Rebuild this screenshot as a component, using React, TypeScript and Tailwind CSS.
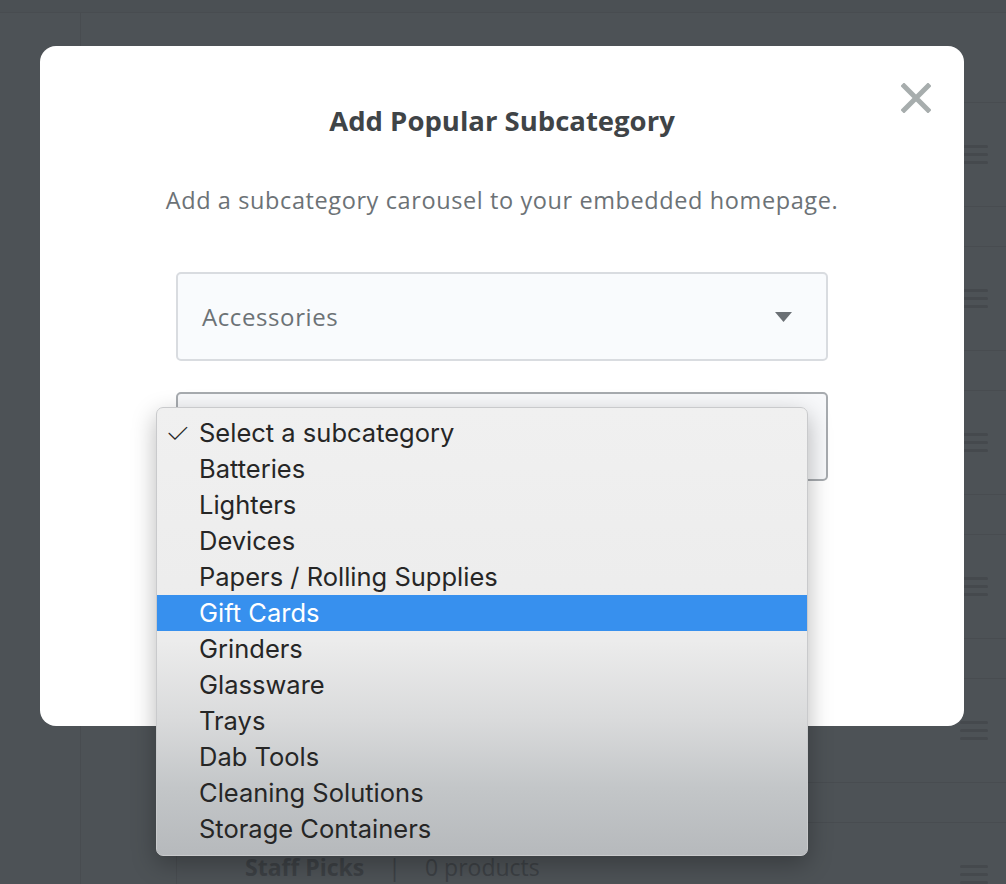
const subcategories = [
  "Select a subcategory",
  "Batteries",
  "Lighters",
  "Devices",
  "Papers / Rolling Supplies",
  "Gift Cards",
  "Grinders",
  "Glassware",
  "Trays",
  "Dab Tools",
  "Cleaning Solutions",
  "Storage Containers",
];

function Hamburger() {
  return (
    <div className="flex w-[28px] flex-col gap-[5px]">
      <span className="h-[3px] w-full rounded-full bg-[#45494d]" />
      <span className="h-[3px] w-full rounded-full bg-[#45494d]" />
      <span className="h-[3px] w-full rounded-full bg-[#45494d]" />
    </div>
  );
}

export default function App() {
  return (
    <div className="relative h-[884px] w-[1006px] overflow-hidden bg-[#4d5256] font-['Open_Sans',sans-serif]">
      {/* dimmed page behind the modal */}
      <div className="flex h-full flex-col">
        <div className="h-[13px] shrink-0 border-b border-[#484c50] bg-[#4b5054]" />
        <div className="flex flex-1">
          <aside className="w-[81px] shrink-0 border-r border-[#484c50]" />
          <main className="flex flex-1 flex-col gap-[39px] pl-[95px] pt-[89px]">
            {Array.from({ length: 6 }).map((_, i) => (
              <div
                key={i}
                className="flex h-[105px] shrink-0 items-center justify-between border border-r-0 border-[#484c50] pl-[68px] pr-[18px]"
              >
                {i === 5 ? (
                  <div className="flex items-center gap-[24px] self-start pt-[31px] text-[23px] leading-[26px] text-[#3c4044]">
                    <span className="font-bold">Staff Picks</span>
                    <span>|</span>
                    <span>0 products</span>
                  </div>
                ) : (
                  <div />
                )}
                <Hamburger />
              </div>
            ))}
          </main>
        </div>
      </div>

      {/* modal */}
      <div className="absolute left-[40px] top-[46px] flex h-[680px] w-[924px] flex-col items-center rounded-[16px] bg-white px-[136px] pt-[57px]">
        <button className="absolute right-[33px] top-[37px] text-[#a7adad]" aria-label="Close">
          <svg width="30" height="30" viewBox="0 0 30 30">
            <path d="M3 3 L27 27 M27 3 L3 27" stroke="currentColor" strokeWidth="5" strokeLinecap="square" />
          </svg>
        </button>
        <h2 className="text-[27.5px] font-bold leading-[36px] text-[#3f4447]">Add Popular Subcategory</h2>
        <p className="mt-[46px] whitespace-nowrap text-[23.5px] leading-[30px] tracking-[0.6px] text-[#6c7276]">
          Add a subcategory carousel to your embedded homepage.
        </p>
        <div className="mt-[57px] flex h-[89px] w-full items-center justify-between rounded-[5px] border-2 border-[#d9dce0] bg-[#f9fbfd] pl-[24px] pr-[34px]">
          <span className="text-[24px] leading-[30px] tracking-[0.6px] text-[#6c7276]">Accessories</span>
          <svg width="17" height="10" viewBox="0 0 17 10">
            <path d="M0 0 H17 L8.5 10 Z" fill="#6b7075" />
          </svg>
        </div>
        <div className="mt-[31px] h-[89px] w-full rounded-[5px] border-2 border-[#a7abaf] bg-[#f7f8fa]" />
      </div>

      {/* native select popup */}
      <ul className="absolute left-[156px] top-[407px] h-[449px] w-[652px] rounded-[7px] border border-[#c9cacc] bg-[linear-gradient(to_bottom,#f0f0f0_0%,#ececec_52%,#d9dadb_70%,#c3c6c8_85%,#b6b9bc_100%)] pb-[9px] pt-[7px] font-['Inter',sans-serif] shadow-[0_8px_24px_rgba(0,0,0,0.28)]">
        {subcategories.map((name, i) => (
          <li
            key={name}
            className={
              i === 5
                ? "flex h-[36px] items-center bg-[#3790ee] text-[25.5px] text-white"
                : "flex h-[36px] items-center text-[25.5px] text-[#262626]"
            }
          >
            <span className="w-[42px] pl-[8px] text-[29px] font-extralight leading-[36px]">{i === 0 ? "✓" : ""}</span>
            <span>{name}</span>
          </li>
        ))}
      </ul>
    </div>
  );
}
